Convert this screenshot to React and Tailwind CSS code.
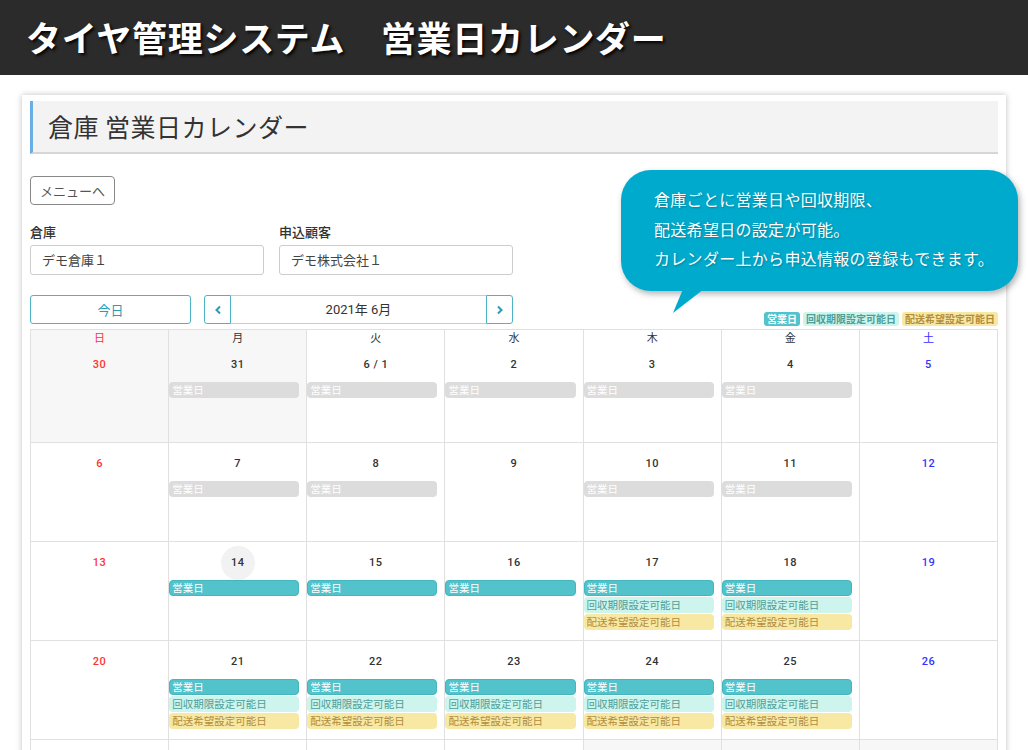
import React from 'react';

const RED = 'text-[#ff3333]';
const BLUE = 'text-[#3333ff]';

// event kinds: off = grey business day, on = teal business day, kai = 回収, hai = 配送
const weeks = [
    [
        { d: '30', other: true },
        { d: '31', other: true, ev: ['off'] },
        { d: '6 / 1', ev: ['off'] },
        { d: '2', ev: ['off'] },
        { d: '3', ev: ['off'] },
        { d: '4', ev: ['off'] },
        { d: '5' },
    ],
    [
        { d: '6' },
        { d: '7', ev: ['off'] },
        { d: '8', ev: ['off'] },
        { d: '9' },
        { d: '10', ev: ['off'] },
        { d: '11', ev: ['off'] },
        { d: '12' },
    ],
    [
        { d: '13' },
        { d: '14', today: true, ev: ['on'] },
        { d: '15', ev: ['on'] },
        { d: '16', ev: ['on'] },
        { d: '17', ev: ['on', 'kai', 'hai'] },
        { d: '18', ev: ['on', 'kai', 'hai'] },
        { d: '19' },
    ],
    [
        { d: '20' },
        { d: '21', ev: ['on', 'kai', 'hai'] },
        { d: '22', ev: ['on', 'kai', 'hai'] },
        { d: '23', ev: ['on', 'kai', 'hai'] },
        { d: '24', ev: ['on', 'kai', 'hai'] },
        { d: '25', ev: ['on', 'kai', 'hai'] },
        { d: '26' },
    ],
];

// next week only peeks in at the bottom edge
const lastWeek = [false, false, false, false, true, true, true];

const dayNames = ['日', '月', '火', '水', '木', '金', '土'];

const Event = ({ kind }) => {
    if (kind === 'off')
        return <div className="h-[16px] mr-[7px] rounded-[4px] bg-[#dcdcdc] text-white text-[10.5px] leading-[16px] pl-[3px]">営業日</div>;
    if (kind === 'on')
        return <div className="h-[16px] mr-[7px] rounded-[4px] bg-[#52c2cb] border border-[#45b5be] text-white text-[10.5px] leading-[14px] pl-[2px]">営業日</div>;
    if (kind === 'kai')
        return <div className="h-[16px] mr-[7px] rounded-[4px] bg-[#cdf4ed] text-[#4f9e97] text-[10.5px] leading-[16px] pl-[3px]">回収期限設定可能日</div>;
    return <div className="h-[16px] mr-[7px] rounded-[4px] bg-[#f7e8a3] text-[#b28c3e] text-[10.5px] leading-[16px] pl-[3px]">配送希望設定可能日</div>;
};

const colColor = (i) => (i === 0 ? RED : i === 6 ? BLUE : 'text-[#333]');

export default function App() {
    return (
        <div className="relative w-[1028px] h-[750px] bg-white font-['Noto_Sans_CJK_JP','Noto_Sans',sans-serif] overflow-hidden">
            {/* top bar */}
            <div className="h-[75px] bg-[#2b2b2b] flex items-center pl-[26px]">
                <h1 className="text-white text-[35px] font-bold tracking-[0.7px] [text-shadow:2px_2px_3px_rgba(0,0,0,0.9)]">
                    タイヤ管理システム　営業日カレンダー
                </h1>
            </div>

            {/* card */}
            <div className="ml-[22px] mt-[20px] w-[984px] bg-white px-[8px] pt-[6px] shadow-[0_0_6px_rgba(0,0,0,0.25)]">
                <div className="h-[53px] bg-[#f3f3f3] border-l-[3px] border-[#6aaee6] border-b-2 border-b-[#d6d6d6] flex items-center pl-[15px]">
                    <h2 className="text-[25px] tracking-[0.5px] text-[#333]">倉庫 営業日カレンダー</h2>
                </div>

                <button className="mt-[22px] h-[29px] px-[9px] border border-[#888] rounded-[4px] text-[13px] text-[#555] bg-white">
                    メニューへ
                </button>

                <div className="flex gap-[15px] mt-[19px]">
                    <div className="w-[234px]">
                        <div className="text-[13px] font-medium text-[#333] leading-[16px]">倉庫</div>
                        <div className="mt-[5px] h-[30px] border border-[#ccc] rounded-[3px] flex items-center pl-[11px] text-[13px] text-[#444]">デモ倉庫１</div>
                    </div>
                    <div className="w-[234px]">
                        <div className="text-[13px] font-medium text-[#333] leading-[16px]">申込顧客</div>
                        <div className="mt-[5px] h-[30px] border border-[#ccc] rounded-[3px] flex items-center pl-[11px] text-[13px] text-[#444]">デモ株式会社１</div>
                    </div>
                </div>

                {/* toolbar */}
                <div className="flex items-end mt-[20px]">
                    <button className="w-[161px] h-[29px] border border-[#4db3c6] rounded-[3px] text-[13px] text-[#2a9db5] bg-white">今日</button>
                    <div className="ml-[13px] flex h-[29px]">
                        <button className="w-[27px] border border-[#4db3c6] rounded-l-[3px] flex items-center justify-center bg-white">
                            <svg width="8" height="10" viewBox="0 0 8 10"><path d="M6 1.5 2.5 5 6 8.5" fill="none" stroke="#2a9db5" strokeWidth="2" /></svg>
                        </button>
                        <div className="w-[255px] border-y border-[#ccc] flex items-center justify-center text-[13px] text-[#333] font-['Roboto','Noto_Sans_CJK_JP',sans-serif]">2021年 6月</div>
                        <button className="w-[27px] border border-[#4db3c6] rounded-r-[3px] flex items-center justify-center bg-white">
                            <svg width="8" height="10" viewBox="0 0 8 10"><path d="M2 1.5 5.5 5 2 8.5" fill="none" stroke="#2a9db5" strokeWidth="2" /></svg>
                        </button>
                    </div>
                    <div className="ml-auto flex gap-[3px] mb-[-2px] text-[10px] font-bold leading-[14px]">
                        <span className="px-[3px] rounded-[3px] bg-[#52c2cb] text-white">営業日</span>
                        <span className="px-[3px] rounded-[3px] bg-[#cdf4ed] text-[#4f9e97]">回収期限設定可能日</span>
                        <span className="px-[3px] rounded-[3px] bg-[#f7e8a3] text-[#b28c3e]">配送希望設定可能日</span>
                    </div>
                </div>

                {/* calendar */}
                <div className="mt-[5px] border-t border-l border-[#e0e0e0]">
                    <div className="grid grid-cols-7">
                        {dayNames.map((n, i) => (
                            <div key={n} className={`h-[14px] border-r border-[#e0e0e0] text-center text-[11px] leading-[14px] ${colColor(i)} ${i < 2 ? 'bg-[#f7f7f7]' : ''}`}>
                                {n}
                            </div>
                        ))}
                    </div>
                    {weeks.map((w, wi) => (
                        <div key={wi} className={`grid grid-cols-7 ${wi > 0 ? 'border-t border-[#e0e0e0]' : ''}`}>
                            {w.map((c, ci) => (
                                <div key={ci} className={`h-[98px] border-r border-[#e0e0e0] flex flex-col ${c.other ? 'bg-[#f7f7f7]' : 'bg-white'}`}>
                                    <div className="h-[34px] mt-[4px] flex items-center justify-center">
                                        <span className={`font-['Roboto',sans-serif] text-[11px] font-medium tracking-[0.5px] ${colColor(ci)} ${c.today ? 'w-[34px] h-[34px] rounded-full bg-[#f2f2f2] flex items-center justify-center' : ''}`}>
                                            {c.d}
                                        </span>
                                    </div>
                                    <div className="flex flex-col gap-[1px]">
                                        {(c.ev || []).map((k) => <Event key={k} kind={k} />)}
                                    </div>
                                </div>
                            ))}
                        </div>
                    ))}
                    <div className="grid grid-cols-7 border-t border-[#e0e0e0]">
                        {lastWeek.map((other, i) => (
                            <div key={i} className={`h-[20px] border-r border-[#e0e0e0] ${other ? 'bg-[#f7f7f7]' : 'bg-white'}`} />
                        ))}
                    </div>
                </div>
            </div>

            {/* speech bubble */}
            <div className="absolute left-[621px] top-[170px] w-[397px] h-[121px] rounded-[30px] bg-[#00aacd] shadow-[2px_3px_6px_rgba(0,0,0,0.3)] pl-[33px] pt-[15px]">
                <div className="text-white text-[16px] leading-[29.5px] tracking-[0.3px] [text-shadow:1px_1px_2px_rgba(0,0,0,0.25)] whitespace-nowrap">
                    <div>倉庫ごとに営業日や回収期限、</div>
                    <div>配送希望日の設定が可能。</div>
                    <div>カレンダー上から申込情報の登録もできます。</div>
                </div>
                <svg className="absolute left-[52px] top-[119px]" width="32" height="25" viewBox="0 0 32 25">
                    <path d="M10 0 L31 0 L0 24 Z" fill="#00aacd" />
                </svg>
            </div>
        </div>
    );
}
